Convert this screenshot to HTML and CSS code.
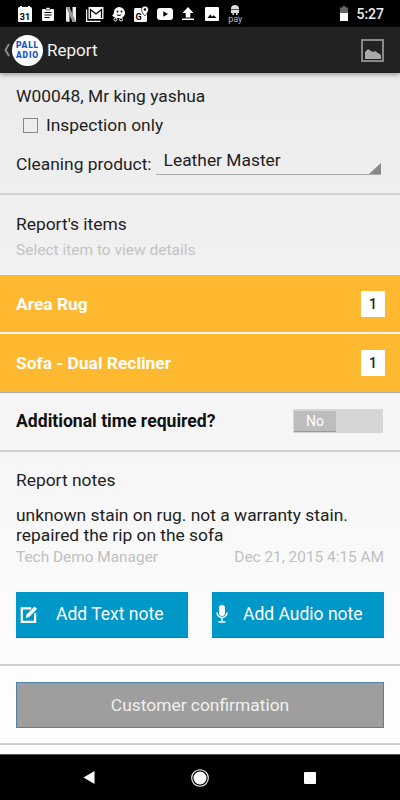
FILE: index.html
```html
<!DOCTYPE html>
<html lang="en">
<head>
    <meta charset="UTF-8">
    <meta name="viewport" content="width=device-width, initial-scale=1.0">
    <title>Report</title>
    <link rel="stylesheet" href="styles.css">
</head>
<body>
    <div class="screen">
        <div class="status-bar">
            <div class="status-icons">
                <svg width="16" height="16" viewBox="0 0 16 16"><rect x="1" y="1" width="14" height="15" rx="1.5" fill="#fff"/><rect x="3" y="0" width="2" height="2" fill="#fff"/><rect x="11" y="0" width="2" height="2" fill="#fff"/><text x="8" y="13.5" text-anchor="middle" class="cal-day">31</text></svg>
                <svg width="16" height="16" viewBox="0 0 16 16"><path d="M3 3h10a1 1 0 0 1 1 1v10a1 1 0 0 1-1 1H3a1 1 0 0 1-1-1V4a1 1 0 0 1 1-1z" fill="#fff"/><path d="M6 1.500h4V4H6z" fill="#fff" stroke="#000" stroke-width=".6"/><path d="M4.500 6.500h7M4.500 9h7M4.500 11.500h5" stroke="#000" stroke-width="1.200"/></svg>
                <svg width="12" height="16" viewBox="0 0 12 16"><path d="M1 1h3.500v15L1 15.500z" fill="#eee"/><path d="M7.500 1H11v14.500L7.500 16z" fill="#eee"/><path d="M1 1h3.500l6.500 15H7.500z" fill="#999"/></svg>
                <svg width="18" height="16" viewBox="0 0 18 16"><path d="M.6 3.500v11.900h14" fill="none" stroke="#fff" stroke-width="1.200"/><rect x="2.500" y="1" width="15" height="12" rx=".8" fill="#fff"/><path d="M4.500 12V3.500l5.500 4.500 5.500-4.500V12" fill="none" stroke="#000" stroke-width="1.300"/></svg>
                <svg width="17" height="17" viewBox="0 0 17 17"><path d="M9 2a6 6 0 0 1 6 6c0 2.500-1.500 4-3.500 5H6c-1.500-.5-3-1.500-4-3 1.500 0 1.800-1 1.800-2.500A5.400 5.400 0 0 1 9 2z" fill="#fff"/><circle cx="5.500" cy="14.500" r="1.500" fill="none" stroke="#fff"/><circle cx="11" cy="14.500" r="1.500" fill="none" stroke="#fff"/><circle cx="7.500" cy="6.500" r=".9" fill="#000"/><circle cx="11.500" cy="6.500" r=".9" fill="#000"/><path d="M6.800 9.500c1 1.300 3.400 1.300 4.400 0" fill="none" stroke="#000"/></svg>
                <svg width="15" height="16" viewBox="0 0 15 16"><rect x="0" y="2" width="13" height="14" rx="1.500" fill="#fff"/><text x="4.500" y="14" class="map-g">G</text><path d="M11 0a3.500 3.500 0 0 1 3.500 3.500C14.500 6 11 10 11 10S7.500 6 7.500 3.500A3.500 3.500 0 0 1 11 0z" fill="#fff" stroke="#000" stroke-width=".7"/><circle cx="11" cy="3.500" r="1.200" fill="#000"/></svg>
                <svg width="16" height="12" viewBox="0 0 16 12"><rect width="16" height="12" rx="3" fill="#fff"/><path d="M6.300 3.300v5.400L11 6z" fill="#000"/></svg>
                <svg width="12" height="13" viewBox="0 0 12 13"><path d="M6 0l5.500 6H8.300v4.500H3.700V6H.5z" fill="#fff"/><rect y="11.500" width="12" height="1.500" fill="#fff"/></svg>
                <svg width="14" height="14" viewBox="0 0 14 14"><rect width="14" height="14" rx="1.200" fill="#fff"/><path d="M2.500 11l2.800-3.500 2 2.300 1.500-1.500 2.700 2.700z" fill="#000"/></svg>
                <div class="pay-icon">
                    <svg width="10" height="11" viewBox="0 0 10 11"><path d="M1 5a4 4 0 0 1 8 0z" fill="#ddd"/><rect x="1" y="5.600" width="8" height="3.400" fill="#ddd"/><rect x="2.500" y="9" width="1.500" height="2" fill="#ddd"/><rect x="6" y="9" width="1.500" height="2" fill="#ddd"/></svg>
                    <span class="pay-text">pay</span>
                </div>
            </div>
            <div class="status-right">
                <svg width="8" height="15" viewBox="0 0 8 15"><path d="M2.500 0h3v1.500H8v13.500H0V1.500h2.500z" fill="#666"/><rect y="7" width="8" height="8" fill="#fff"/></svg>
                <span class="clock">5:27</span>
            </div>
        </div>

        <header class="app-bar">
            <svg class="back-chevron" width="6" height="14" viewBox="0 0 6 14"><path d="M5 1L1.500 7 5 13" fill="none" stroke="#8a8a8a" stroke-width="2"/></svg>
            <div class="logo">PALL<br>ADIO</div>
            <h1 class="app-title">Report</h1>
            <button class="photo-btn">
                <svg width="16" height="12" viewBox="0 0 16 12"><path d="M0 12V5l3-3 3 2 2 1 2-1 3 2 3 2v4z" fill="#aaa"/></svg>
            </button>
        </header>

        <main class="content">
            <section class="job-info">
                <div class="line">W00048, Mr king yashua</div>
                <label class="check-row"><span class="checkbox"></span>Inspection only</label>
                <div class="product-row">
                    <span>Cleaning product:</span>
                    <div class="select-box">Leather Master</div>
                </div>
            </section>

            <section class="items-head">
                <div class="line">Report's items</div>
                <div class="hint">Select item to view details</div>
            </section>

            <div class="item-row">
                <span>Area Rug</span>
                <span class="badge">1</span>
            </div>
            <div class="item-row">
                <span>Sofa - Dual Recliner</span>
                <span class="badge">1</span>
            </div>

            <section class="time-row">
                <strong>Additional time required?</strong>
                <div class="toggle"><span class="toggle-thumb">No</span></div>
            </section>

            <section class="notes">
                <div class="line">Report notes</div>
                <p class="note-text">unknown stain on rug. not a warranty stain.<br>repaired the rip on the sofa</p>
                <div class="note-meta">
                    <span>Tech Demo Manager</span>
                    <span>Dec 21, 2015 4:15 AM</span>
                </div>
                <div class="note-actions">
                    <button class="action-btn">
                        <svg width="20" height="20" viewBox="0 0 18 18"><path d="M11 4H2.500v12h12V8" fill="none" stroke="#fff" stroke-width="2"/><path d="M6 12.500l.8-3L14 2.300l2.300 2.300-7.200 7.200z" fill="#fff"/></svg>
                        <span>Add Text note</span>
                    </button>
                    <button class="action-btn audio">
                        <svg width="12" height="18" viewBox="0 0 12 18"><rect x="3" y="0" width="6" height="11" rx="3" fill="#fff"/><path d="M1 7.500a5 5 0 0 0 10 0" fill="none" stroke="#fff" stroke-width="1.400"/><path d="M6 12.500V16M2.500 17h7" stroke="#fff" stroke-width="1.400"/></svg>
                        <span>Add Audio note</span>
                    </button>
                </div>
            </section>

            <section class="confirm">
                <button class="confirm-btn">Customer confirmation</button>
            </section>
        </main>

        <nav class="nav-bar">
            <svg width="12" height="13" viewBox="0 0 12 13"><path d="M11.500 0v13L.5 6.500z" fill="#fff"/></svg>
            <svg width="18" height="18" viewBox="0 0 18 18"><circle cx="9" cy="9" r="8.300" fill="none" stroke="#fff" stroke-width="1.100"/><circle cx="9" cy="9" r="6.500" fill="#fff"/></svg>
            <svg width="12" height="12" viewBox="0 0 12 12"><rect width="12" height="12" rx="1" fill="#fff"/></svg>
        </nav>
    </div>
</body>
</html>
```

FILE: styles.css
```css
body {
    margin: 0;
    font-family: 'Roboto', sans-serif;
    color: #222;
}

p, h1 {
    margin: 0;
}

button {
    font-family: inherit;
    padding: 0;
    cursor: pointer;
}

.screen {
    width: 400px;
    height: 800px;
    display: flex;
    flex-direction: column;
    overflow: hidden;
}

/* status bar */
.status-bar {
    height: 27px;
    flex-shrink: 0;
    background-color: #000;
    display: flex;
    align-items: center;
    justify-content: space-between;
    padding-left: 13px;
    padding-right: 16px;
}

.status-icons {
    display: grid;
    grid-auto-flow: column;
    grid-auto-columns: 23.4px;
    justify-items: center;
    align-items: center;
}

.cal-day {
    font-size: 9px;
    font-weight: 700;
    fill: #000;
}

.map-g {
    font-size: 9px;
    font-weight: 700;
    fill: #000;
    text-anchor: middle;
}

.pay-icon {
    display: flex;
    flex-direction: column;
    align-items: center;
    line-height: 8px;
}

.pay-text {
    font-size: 9px;
    color: #bbb;
}

.status-right {
    display: flex;
    align-items: center;
    gap: 8px;
}

.clock {
    color: #eee;
    font-size: 14px;
    font-weight: 500;
}

/* action bar */
.app-bar {
    height: 46px;
    flex-shrink: 0;
    background-color: #222;
    display: flex;
    align-items: center;
    padding-left: 4px;
    padding-right: 16px;
    box-shadow: 0 2px 4px rgba(0,0,0,0.3);
    position: relative;
}

.logo {
    width: 31px;
    height: 31px;
    margin-left: 2px;
    border-radius: 50%;
    background-color: #fff;
    color: #1255c4;
    font-size: 8.500px;
    font-weight: 900;
    letter-spacing: .8px;
    line-height: 10px;
    text-align: center;
    display: flex;
    align-items: center;
    justify-content: center;
}

.app-title {
    margin-left: 4px;
    color: #f2f2f2;
    font-size: 17px;
    font-weight: 400;
    flex-grow: 1;
}

.photo-btn {
    width: 23px;
    height: 23px;
    background: none;
    border: 2px solid #888;
    display: flex;
    align-items: flex-end;
    justify-content: center;
}

.photo-btn svg {
    display: block;
    margin-bottom: 1px;
}

/* page body */
.content {
    flex-grow: 1;
    background: linear-gradient(to bottom, #ebebeb, #ffffff);
    font-size: 17.400px;
}

section {
    border-bottom: 2px solid #d0d0d0;
    box-sizing: border-box;
}

.line {
    line-height: 20px;
}

.job-info {
    height: 122px;
    padding: 13px 16px 0;
}

.check-row {
    display: flex;
    align-items: center;
    margin: 9px 0 0 7px;
    line-height: 20px;
}

.checkbox {
    width: 13px;
    height: 13px;
    border: 1.500px solid #888;
    margin-right: 8px;
}

.product-row {
    display: flex;
    align-items: flex-end;
    margin-top: 14px;
    line-height: 22px;
}

.select-box {
    width: 225px;
    margin-left: 4px;
    padding-left: 8px;
    box-sizing: border-box;
    border-bottom: 1px solid #aaa;
    padding-bottom: 3px;
    position: relative;
}

.select-box::after {
    content: "";
    position: absolute;
    right: 0;
    bottom: 0;
    border-style: solid;
    border-width: 0 0 11px 12px;
    border-color: transparent transparent #888 transparent;
}

.items-head {
    height: 80px;
    padding: 19px 16px 0;
    border-bottom: none;
}

.hint {
    margin-top: 7px;
    color: #c4c4c4;
    font-size: 15.500px;
    line-height: 18px;
}

.item-row {
    height: 57px;
    margin-bottom: 1.500px;
    background-color: #ffb931;
    color: #fff;
    font-weight: 700;
    display: flex;
    align-items: center;
    justify-content: space-between;
    padding: 0 15px 0 16px;
}

.item-row:last-of-type {
    margin-bottom: 0;
    height: 58px;
    border-bottom: 1px solid #aaa;
}

.badge {
    width: 24px;
    height: 26px;
    background-color: #fff;
    color: #222;
    font-size: 14px;
    font-weight: 500;
    display: flex;
    align-items: center;
    justify-content: center;
}

.time-row {
    height: 59px;
    padding: 0 17px 0 16px;
    display: flex;
    align-items: center;
    justify-content: space-between;
    color: #111;
    font-size: 17.600px;
}

.toggle {
    width: 90px;
    height: 24px;
    background-color: #d6d6d6;
    box-sizing: border-box;
    padding: 2px 0 1px 1px;
    display: flex;
}

.toggle-thumb {
    width: 42px;
    background-color: #bdbdbd;
    border-bottom: 1px solid #999;
    color: #fff;
    font-size: 14px;
    display: flex;
    align-items: center;
    justify-content: center;
}

.notes {
    height: 214px;
    padding: 18px 16px 0;
}

.note-text {
    margin-top: 15px;
    line-height: 20px;
}

.note-meta {
    display: flex;
    justify-content: space-between;
    margin-top: 2px;
    color: #c0c0c0;
    font-size: 15.400px;
    line-height: 20px;
}

.note-actions {
    display: flex;
    justify-content: space-between;
    margin-top: 25px;
}

.action-btn {
    width: 172px;
    height: 46px;
    background-color: #0097c9;
    border: none;
    border-bottom: 1px solid #1878a8;
    color: #fff;
    font-size: 17.500px;
    display: flex;
    align-items: center;
    padding-left: 3px;
    gap: 17px;
}

.action-btn.audio {
    padding-left: 4px;
    gap: 15px;
}

.confirm {
    height: 79px;
    padding-top: 16px;
}

.confirm-btn {
    display: block;
    width: 368px;
    height: 46px;
    margin: 0 auto;
    background-color: #9e9e9e;
    border: 1px solid #4f84a8;
    color: #f0f0f0;
    font-size: 17.400px;
}

/* soft keys */
.nav-bar {
    height: 46px;
    flex-shrink: 0;
    background-color: #000;
    border-top: 1px solid #555;
    box-sizing: border-box;
    display: flex;
    align-items: center;
}

.nav-bar svg:nth-child(1) {
    margin-left: 83px;
}

.nav-bar svg:nth-child(2) {
    margin-left: 96px;
}

.nav-bar svg:nth-child(3) {
    margin-left: 95px;
}
```
